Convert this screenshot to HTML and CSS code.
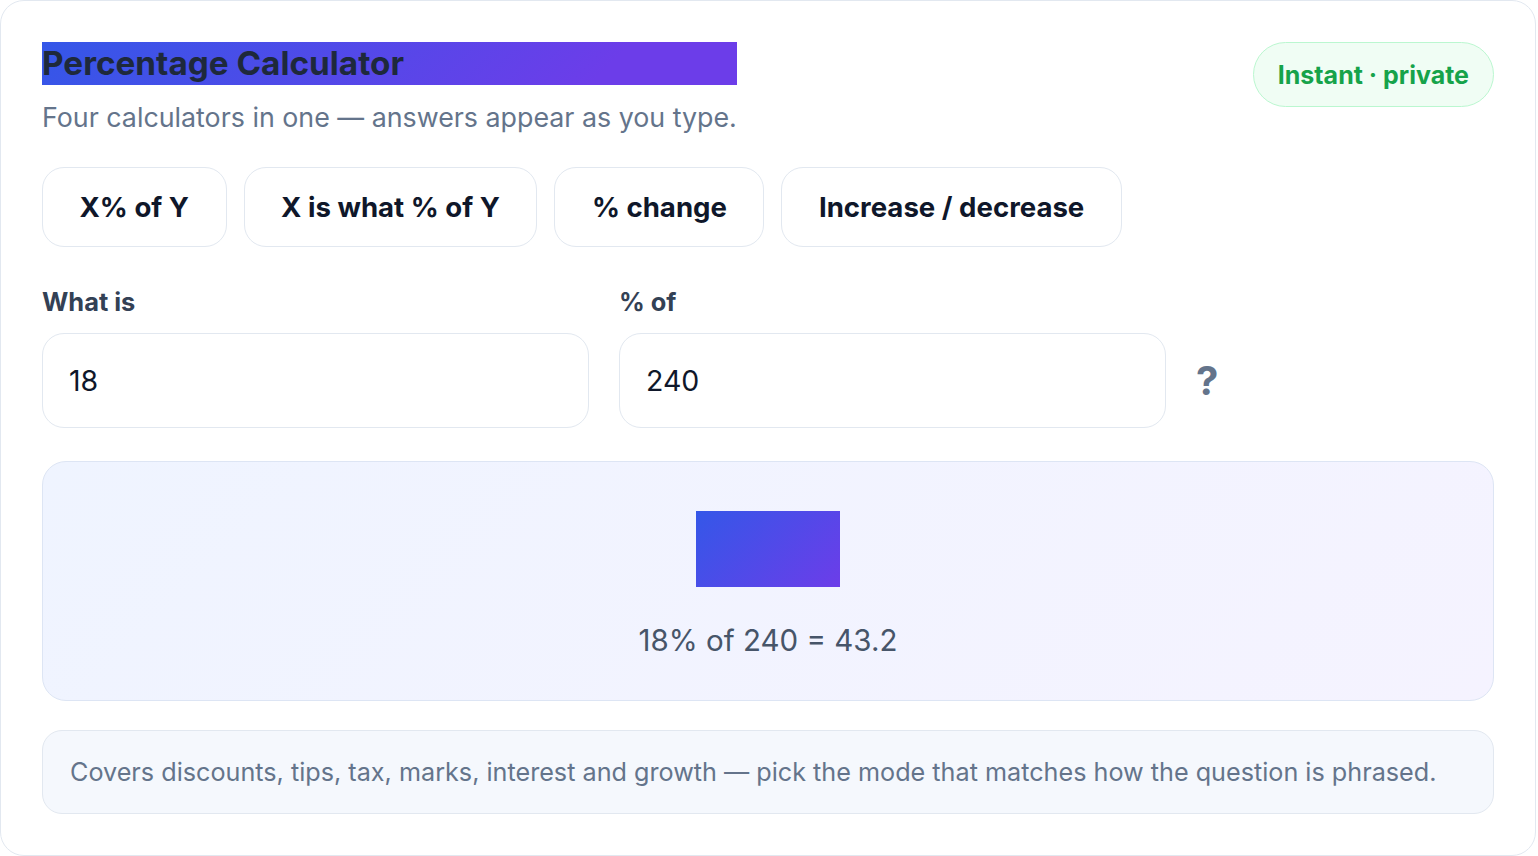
FILE: index.html
```html
<!DOCTYPE html>
<html lang="en">
<head>
<meta charset="utf-8">
<title>Percentage Calculator</title>
<link rel="stylesheet" href="styles.css">
</head>
<body>
<main class="card">
  <header class="header">
    <div class="intro">
      <h1 class="title">Percentage Calculator</h1>
      <p class="subtitle">Four calculators in one — answers appear as you type.</p>
    </div>
    <span class="badge">Instant · private</span>
  </header>

  <nav class="tabs">
    <button class="tab">X% of Y</button>
    <button class="tab">X is what % of Y</button>
    <button class="tab">% change</button>
    <button class="tab">Increase / decrease</button>
  </nav>

  <section class="fields">
    <label class="field">
      <span class="label">What is</span>
      <span class="input">18</span>
    </label>
    <label class="field">
      <span class="label">% of</span>
      <span class="input">240</span>
    </label>
    <div class="qmark">?</div>
  </section>

  <section class="result">
    <div class="answer">43.2</div>
    <p class="equation">18% of 240 = 43.2</p>
  </section>

  <p class="note">Covers discounts, tips, tax, marks, interest and growth — pick the mode that matches how the question is phrased.</p>
</main>
</body>
</html>
```
FILE: styles.css
```css
* { box-sizing: border-box; }

html, body {
  margin: 0;
  padding: 0;
  background: #ffffff;
}

body {
  font-family: Inter, "Noto Sans", "Liberation Sans", sans-serif;
  color: #0f172a;
}

.card {
  max-width: 1536px;
  border: 1px solid #e2e8f0;
  border-radius: 24px;
  background: #ffffff;
  padding: 41px;
}

.header {
  display: flex;
  justify-content: space-between;
  align-items: flex-start;
}

.title {
  margin: 0;
  font-size: 33.3px;
  line-height: 43px;
  font-weight: 700;
  color: #1e293b;
  background: linear-gradient(135deg, #3457e8 0%, #6c3de9 80%);
}

.subtitle {
  margin: 14px 0 0;
  font-size: 26.8px;
  line-height: 36px;
  color: #64748b;
}

.badge {
  display: inline-block;
  padding: 13.5px 24px;
  border: 1.5px solid #bbf7d0;
  border-radius: 999px;
  background: #f0fdf4;
  color: #16a34a;
  font-size: 25px;
  line-height: 36px;
  font-weight: 700;
}

.tabs {
  display: flex;
  gap: 17px;
  margin-top: 32px;
}

.tab {
  font-family: inherit;
  font-size: 27.6px;
  line-height: 38px;
  font-weight: 700;
  color: #0f172a;
  background: #ffffff;
  border: 1.5px solid #e2e8f0;
  border-radius: 22px;
  padding: 20px 36.5px;
}

.fields {
  display: grid;
  grid-template-columns: 1fr 1fr 298px;
  column-gap: 30px;
  margin-top: 38px;
}

.field {
  display: flex;
  flex-direction: column;
  gap: 14px;
}

.label {
  font-size: 25.4px;
  line-height: 34px;
  font-weight: 700;
  color: #334155;
}

.input {
  display: flex;
  align-items: center;
  height: 95px;
  padding: 0 26px;
  border: 1.5px solid #e2e8f0;
  border-radius: 22px;
  font-size: 28.5px;
  color: #0f172a;
  background: #ffffff;
}

.qmark {
  align-self: end;
  height: 95px;
  display: flex;
  align-items: center;
  font-size: 40px;
  font-weight: 700;
  color: #64748b;
}

.result {
  margin-top: 33px;
  border: 1.5px solid #dde5f4;
  border-radius: 24px;
  background: linear-gradient(135deg, #eff4ff, #f5f3ff);
  padding: 48.5px 24px 42px;
  text-align: center;
}

.answer {
  display: inline-block;
  font-size: 62px;
  line-height: 76px;
  font-weight: 800;
  color: transparent;
  background: linear-gradient(135deg, #3457e8, #6c3de9);
}

.equation {
  margin: 35px 0 0;
  font-size: 29.5px;
  line-height: 36px;
  color: #475569;
}

.note {
  margin: 29px 0 0;
  padding: 23px 27px;
  border: 1px solid #e2e8f0;
  border-radius: 20px;
  background: #f5f8fd;
  font-size: 25.2px;
  line-height: 36px;
  color: #64748b;
}
```
